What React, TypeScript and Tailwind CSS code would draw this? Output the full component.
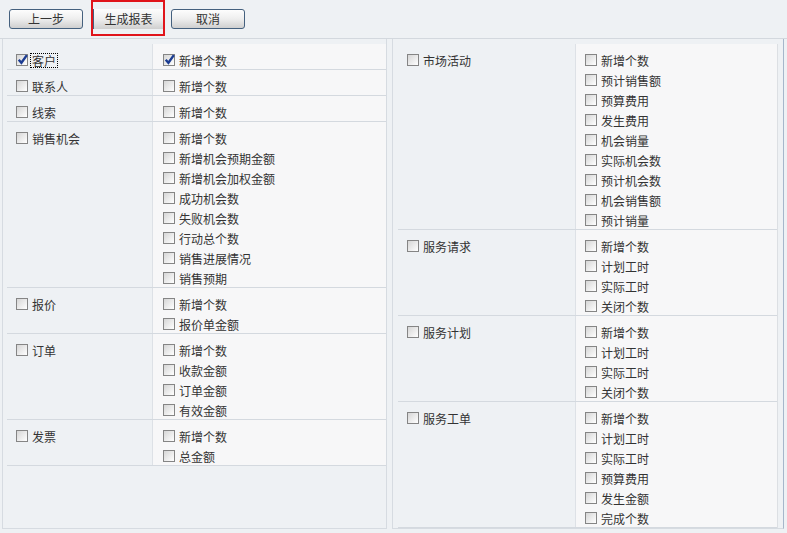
import React from 'react';

type Group = { name: string; checked?: boolean; items: { label: string; checked?: boolean }[] };

const svc = ['新增个数', '计划工时', '实际工时', '关闭个数'];
const mk = (labels: string[]) => labels.map((label) => ({ label }));

const leftGroups: Group[] = [
  { name: '客户', checked: true, items: [{ label: '新增个数', checked: true }] },
  { name: '联系人', items: mk(['新增个数']) },
  { name: '线索', items: mk(['新增个数']) },
  {
    name: '销售机会',
    items: mk(['新增个数', '新增机会预期金额', '新增机会加权金额', '成功机会数', '失败机会数', '行动总个数', '销售进展情况', '销售预期']),
  },
  { name: '报价', items: mk(['新增个数', '报价单金额']) },
  { name: '订单', items: mk(['新增个数', '收款金额', '订单金额', '有效金额']) },
  { name: '发票', items: mk(['新增个数', '总金额']) },
];

const rightGroups: Group[] = [
  {
    name: '市场活动',
    items: mk(['新增个数', '预计销售额', '预算费用', '发生费用', '机会销量', '实际机会数', '预计机会数', '机会销售额', '预计销量']),
  },
  { name: '服务请求', items: mk(svc) },
  { name: '服务计划', items: mk(svc) },
  { name: '服务工单', items: mk(['新增个数', '计划工时', '实际工时', '预算费用', '发生金额', '完成个数']) },
];

function Box({ checked }: { checked?: boolean }) {
  return (
    <span className="relative w-[12px] h-[12px] shrink-0 border border-[#858585] bg-gradient-to-br from-[#d6d6d6] to-[#ffffff] mr-[4px]">
      {checked && (
        <svg viewBox="0 0 12 12" className="absolute -left-[1px] -top-[2px] w-[13px] h-[13px]">
          <path d="M2.5 6.2 L5 9 L10 2" fill="none" stroke="#1b3c92" strokeWidth="2.2" />
        </svg>
      )}
    </span>
  );
}

function Check({ label, checked, focus }: { label: string; checked?: boolean; focus?: boolean }) {
  return (
    <div className="h-[20px] last:h-[19px] flex items-start pt-[4px]">
      <Box checked={checked} />
      <span className={`leading-[13px] ${focus ? 'outline-1 outline-dotted outline-black -ml-[1px] px-[1px]' : ''}`}>{label}</span>
    </div>
  );
}

function Table({ groups, leftW, rightPad }: { groups: Group[]; leftW: string; rightPad: string }) {
  return (
    <div className="flex flex-col">
      {groups.map((g, i) => (
        <div key={g.name} className="flex border-b border-[#d4d9df]">
          <div className={`${leftW} shrink-0 pl-[9px] pt-[6px]`}>
            <Check label={g.name} checked={g.checked} focus={i === 0 && g.checked} />
          </div>
          <div className={`flex-1 bg-[#f7f7f8] border-l border-[#dde1e6] ${rightPad} pt-[6px]`}>
            {g.items.map((it, j) => (
              <Check key={j} label={it.label} checked={it.checked} />
            ))}
          </div>
        </div>
      ))}
    </div>
  );
}

function Btn({ children }: { children: React.ReactNode }) {
  return (
    <button className="mt-[9px] w-[74px] h-[20px] rounded-[3px] border border-[#44607e] bg-gradient-to-b from-[#fdfdfd] via-[#eeeeee] to-[#cfcfcf] text-[12px] text-[#333] leading-[18px]">
      {children}
    </button>
  );
}

export default function App() {
  return (
    <div
      className="w-[787px] h-[533px] bg-[#eef1f4] overflow-hidden text-[12px] text-[#333]"
      style={{ fontFamily: '"Noto Sans CJK SC", "Noto Sans", sans-serif' }}
    >
      <div className="h-[38px] flex items-start pl-[9px]">
        <Btn>上一步</Btn>
        <div className="ml-[8px] w-[74px] h-[36px] border-2 border-[#e0141b] pt-[7px]">
          <div className="w-full h-[20px] border-l border-[#44607e] bg-gradient-to-b from-[#fdfdfd] via-[#eeeeee] to-[#cfcfcf] text-center leading-[20px]">
            生成报表
          </div>
        </div>
        <div className="ml-[6px] flex">
          <Btn>取消</Btn>
        </div>
      </div>
      <div className="border-t border-[#d3d8de] flex">
        <div className="ml-[2px] w-[385px] h-[490px] border-l border-r border-b border-[#d6dbe1] pt-[5px] pl-[4px]">
          <Table groups={leftGroups} leftW="w-[145px]" rightPad="pl-[10px]" />
        </div>
        <div className="ml-[5px] w-[392px] h-[490px] border-l border-r border-b border-l-[#d6dbe1] border-b-[#d6dbe1] border-r-[#a6b6ca] pt-[5px] pl-[5px] pr-[5px]">
          <div className="border-r border-[#dcdfe3]">
            <Table groups={rightGroups} leftW="w-[177px]" rightPad="pl-[9px]" />
          </div>
        </div>
      </div>
    </div>
  );
}
